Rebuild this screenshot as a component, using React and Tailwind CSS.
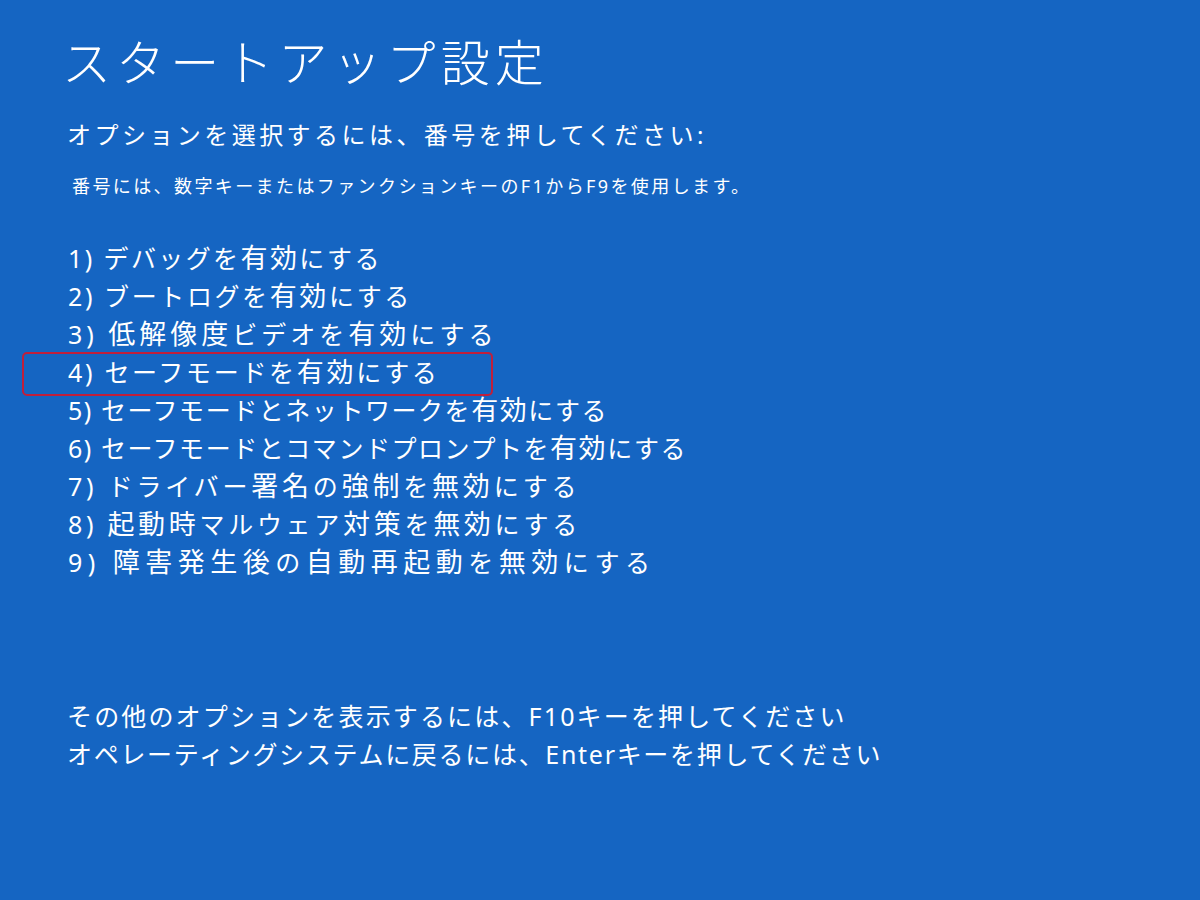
// each row carries its own tracking so the line lengths line up with the screenshot
const options = [
  { text: '1) デバッグを有効にする', cls: 'tracking-[2.4px]' },
  { text: '2) ブートログを有効にする', cls: 'tracking-[2.6px]' },
  { text: '3) 低解像度ビデオを有効にする', cls: 'tracking-[4px]' },
  { text: '4) セーフモードを有効にする', cls: 'tracking-[2.7px]' },
  { text: '5) セーフモードとネットワークを有効にする', cls: 'tracking-[1.55px]' },
  { text: '6) セーフモードとコマンドプロンプトを有効にする', cls: 'tracking-[1.55px]' },
  { text: '7) ドライバー署名の強制を無効にする', cls: 'tracking-[3.8px]' },
  { text: '8) 起動時マルウェア対策を無効にする', cls: 'tracking-[3.7px]' },
  { text: '9) 障害発生後の自動再起動を無効にする', cls: 'tracking-[5.5px]' },
];

const font = {
  fontFamily: '"Noto Sans", "Noto Sans CJK JP", sans-serif',
};

// kanji look a touch bigger than kana in the boot menu font
function Jp({ text }) {
  return text.split(/([\u4e00-\u9fff]+)/).map((part, i) =>
    /[\u4e00-\u9fff]/.test(part) ? (
      <span key={i} className="text-[27px]">{part}</span>
    ) : (
      part
    )
  );
}

export default function App() {
  return (
    <div className="w-[1200px] h-[900px] bg-[#1565c2] text-white overflow-hidden" style={font}>
      <div className="pl-[62px] pt-[26px]">
        <h1 className="text-[49px] leading-[72px] font-light tracking-[5.1px]">スタートアップ設定</h1>

        <p className="mt-[21px] ml-[5px] text-[24px] leading-[32px] tracking-[3.45px]">
          オプションを選択するには、番号を押してください:
        </p>
        <p className="mt-[23px] ml-[10px] text-[18px] leading-[24px] tracking-[2.4px]">
          番号には、数字キーまたはファンクションキーのF1からF9を使用します。
        </p>

        {/* numbered options */}
        <ul className="mt-[41px] ml-[6px] text-[25px]">
          {options.map((o, i) => (
            <li key={o.text} className={`relative leading-[38px] ${o.cls}`}>
              {i === 3 && (
                <span className="absolute left-[-46px] top-[-1px] w-[471px] h-[44px] border-2 border-[#c01f3c] rounded-[5px]" />
              )}
              <Jp text={o.text} />
            </li>
          ))}
        </ul>

        <div className="mt-[116px] ml-[5px] text-[25px] leading-[38px]">
          <p className="tracking-[2.15px]">その他のオプションを表示するには、F10キーを押してください</p>
          <p className="tracking-[1.7px]">オペレーティングシステムに戻るには、Enterキーを押してください</p>
        </div>
      </div>
    </div>
  );
}
